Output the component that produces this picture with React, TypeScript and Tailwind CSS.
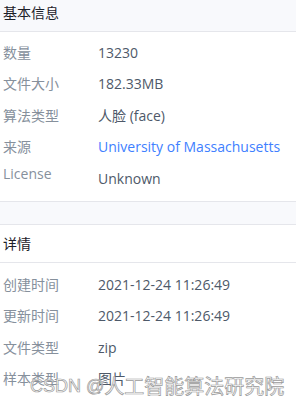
import type { JSX } from "react";

type Row = { label: string; value: string; link?: boolean; lower?: boolean };

const basic: Row[] = [
    { label: "数量", value: "13230" },
    { label: "文件大小", value: "182.33MB" },
    { label: "算法类型", value: "人脸 (face)" },
    { label: "来源", value: "University of Massachusetts", link: true },
    { label: "License", value: "Unknown", lower: true },
];

const detail: Row[] = [
    { label: "创建时间", value: "2021-12-24 11:26:49" },
    { label: "更新时间", value: "2021-12-24 11:26:49" },
    { label: "文件类型", value: "zip" },
    { label: "样本类型", value: "图片" },
];

function InfoRow({ row }: { row: Row }): JSX.Element {
    return (
        <div className={"flex h-[31.5px] " + (row.lower ? "items-start pt-[1px]" : "items-center")}>
            <span className="w-[98px] shrink-0 pl-[3px] text-[#86909c]">{row.label}</span>
            <span className={row.link ? "text-[#4080ff] whitespace-nowrap" : row.lower ? "text-[#4e5969] pt-[5px]" : "text-[#4e5969] whitespace-nowrap"}>
                {row.value}
            </span>
        </div>
    )
}

export default function App(): JSX.Element {
    return (
        <div className="relative w-[296px] h-[405px] overflow-hidden bg-white text-[14px] leading-5 font-['Open_Sans','Noto_Sans_CJK_SC',sans-serif]">
            <div className="h-[32px] bg-[#f8f9fc] border-b border-[#e5e6eb] pl-[3px] pt-[3px] text-[#1d2129]">基本信息</div>
            <div className="pt-[5px] h-[169px]">
                {basic.map((r) => <InfoRow key={r.label} row={r} />)}
            </div>
            <div className="h-[24px] bg-[#f8f9fc] border-y border-[#e5e6eb]"></div>
            <div className="h-[38px] flex items-center pl-[3px] border-b border-[#e5e6eb] text-[#1d2129]">详情</div>
            <div className="pt-[6px]">
                {detail.map((r) => <InfoRow key={r.label} row={r} />)}
            </div>
            <div className="absolute left-[30px] top-[372px] flex items-center leading-7 whitespace-nowrap text-white/70 [-webkit-text-stroke:0.7px_#9a9a9a]">
                <span className="text-[18px] font-['Liberation_Sans',sans-serif]">CSDN @</span>
                <span className="text-[20px] font-['Noto_Sans_CJK_SC',sans-serif]">人工智能算法研究院</span>
            </div>
        </div>
    )
}
